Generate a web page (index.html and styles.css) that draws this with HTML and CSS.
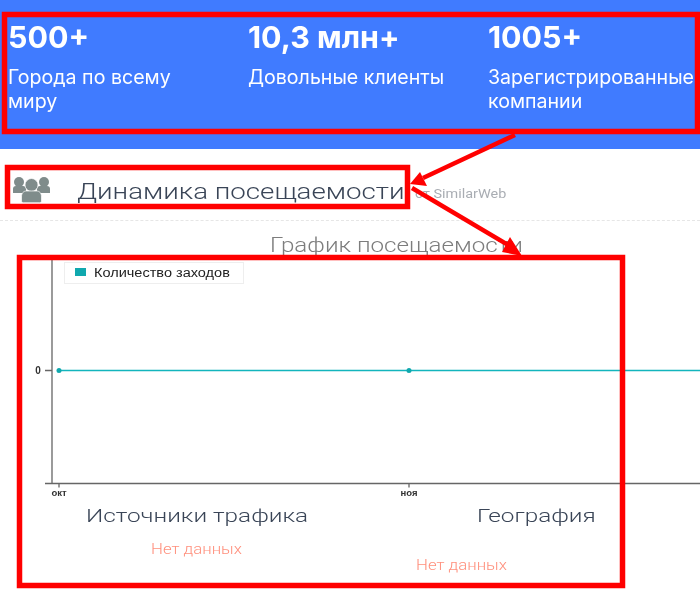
FILE: index.html
```html
<!DOCTYPE html>
<html lang="ru">
<head>
<meta charset="utf-8">
<title>Динамика посещаемости</title>
<link rel="stylesheet" href="styles.css">
</head>
<body>
<div class="page">
  <section class="stats">
    <div class="stat"><div class="stat-num">500+</div><div class="stat-label">Города по всему миру</div></div>
    <div class="stat"><div class="stat-num">10,3 млн+</div><div class="stat-label">Довольные клиенты</div></div>
    <div class="stat"><div class="stat-num">1005+</div><div class="stat-label">Зарегистрированные компании</div></div>
  </section>
  <header class="head">
    <svg class="head-icon" width="40" height="26" viewBox="0 0 40 26">
      <g fill="#7f8c8b">
        <circle cx="7" cy="5" r="5"/>
        <circle cx="32" cy="5" r="5"/>
        <path d="M1 16v-4c0-2 1-3 3-3h7c2 0 3 1 3 3v4z"/>
        <path d="M25 16v-4c0-2 1-3 3-3h7c2 0 3 1 3 3v4z"/>
      </g>
      <g fill="#7f8c8b" stroke="#fff" stroke-width="0.700">
        <circle cx="19.500" cy="8" r="6.500"/>
        <path d="M9.500 24v-4c0-4 2-6 5-6h10c3 0 5 2 5 6v4c0 1-1 1.700-2 1.700H11.500c-1 0-2-.7-2-1.700z"/>
      </g>
    </svg>
    <h1 class="head-title">Динамика посещаемости</h1>
    <span class="head-note">от SimilarWeb</span>
  </header>
  <h2 class="chart-title">График посещаемости</h2>
  <div class="chart">
    <svg class="chart-svg" width="700" height="244" viewBox="0 0 700 244">
      <path class="axis" d="M52 0V226.500M45 226.500H700M59 226.500v4M409 226.500v4M45 113.500h7"/>
      <path class="series" d="M59 113.500H700"/>
      <circle class="dot" cx="59" cy="113.500" r="2.500"/>
      <circle class="dot" cx="409" cy="113.500" r="2.500"/>
      <text class="tick tick-zero" x="38" y="116.500">0</text>
      <text class="tick" x="59" y="238.500">окт</text>
      <text class="tick" x="409" y="238.500">ноя</text>
    </svg>
    <div class="legend"><span class="swatch"></span><span class="legend-text">Количество заходов</span></div>
  </div>
  <div class="columns">
    <section class="col col-traffic">
      <h3 class="col-title">Источники трафика</h3>
      <p class="empty">Нет данных</p>
    </section>
    <section class="col col-geo">
      <h3 class="col-title">География</h3>
      <p class="empty">Нет данных</p>
    </section>
  </div>
  <svg class="marks" width="700" height="593" viewBox="0 0 700 593">
    <rect x="4.500" y="14.500" width="693" height="117"/>
    <rect x="7.500" y="167.500" width="400" height="39"/>
    <rect x="19.500" y="257.500" width="603" height="328"/>
    <path d="M515 135L423 178"/>
    <path d="M412 188L510 246"/>
    <polygon points="410,184 420,172 427,186"/>
    <polygon points="522,256 510,237 502,252"/>
  </svg>
</div>
</body>
</html>
```
FILE: styles.css
```css
* { box-sizing: border-box; }
html, body { margin: 0; background: #fff; }
.page {
  position: relative;
  width: 700px;
  height: 593px;
  overflow: hidden;
  font-family: Roboto, "Liberation Sans", sans-serif;
}
.stats {
  height: 149px;
  background: #407bff;
  color: #fff;
  display: grid;
  grid-template-columns: repeat(3, 240px);
  padding: 18px 0 0 8px;
  font-family: Inter, "Liberation Sans", sans-serif;
}
.stat-num { font-size: 30.400px; font-weight: 700; line-height: 38px; filter: blur(0.3px); }
.stat-label { margin-top: 10px; max-width: 210px; font-size: 19.600px; line-height: 23.500px; filter: blur(0.3px); }
.head {
  height: 72px;
  margin: 0;
  padding: 29px 0 0 12px;
  display: flex;
  align-items: flex-start;
  border-bottom: 1px dashed #e6e6e6;
}
.head-icon { flex: none; margin-top: -1px; filter: blur(0.3px); }
.head-title {
  margin: 0 0 0 25px;
  font-size: 22.500px;
  font-weight: 300;
  line-height: 26px;
  color: #3a4557;
  white-space: nowrap;
  transform: scaleX(1.230);
  transform-origin: left center;
  filter: blur(0.3px);
}
.head-note {
  margin: 9px 0 0 72px;
  font-size: 12px;
  line-height: 14px;
  color: #a9adb3;
  white-space: nowrap;
  transform: scaleX(1.200);
  transform-origin: left center;
  filter: blur(0.3px);
}
.chart-title {
  margin: 14px 0 0 270px;
  font-size: 20px;
  font-weight: 300;
  line-height: 20px;
  color: #7d7d7d;
  white-space: nowrap;
  transform: scaleX(1.210);
  transform-origin: left center;
  filter: blur(0.3px);
}
.chart { position: relative; height: 244px; margin-top: 2px; }
.chart-svg { display: block; filter: blur(0.3px); }
.axis { fill: none; stroke: #666; stroke-width: 1.300; }
.series { fill: none; stroke: #13b5bd; stroke-width: 1.500; }
.dot { fill: #10a8ae; }
.tick {
  font-family: "Liberation Sans", sans-serif;
  font-size: 9.500px;
  font-weight: 700;
  fill: #333;
  text-anchor: middle;
}
.tick-zero { font-size: 10px; }
.legend {
  position: absolute;
  left: 64px;
  top: 5px;
  width: 180px;
  height: 22px;
  display: flex;
  align-items: center;
  padding-left: 10px;
  border: 1px solid #eee;
}
.swatch { width: 11px; height: 8px; background: #10a8ae; margin-top: -3px; }
.legend-text {
  margin-left: 8px;
  font-family: "Liberation Sans", sans-serif;
  font-size: 12px;
  color: #222;
  white-space: nowrap;
  transform: scaleX(1.210);
  transform-origin: left center;
  filter: blur(0.3px);
}
.columns { display: flex; margin-top: 1px; }
.col { white-space: nowrap; }
.col-traffic { width: 477px; padding: 2px 0 0 86px; }
.col-geo { flex: 1; padding-top: 2px; }
.col-title {
  margin: 0;
  font-size: 19px;
  font-weight: 300;
  line-height: 24px;
  color: #3a4557;
  transform: scaleX(1.280);
  transform-origin: left center;
  filter: blur(0.3px);
}
.empty {
  margin: 0;
  font-size: 14px;
  font-weight: 300;
  line-height: 16px;
  color: #ff8f7c;
  transform: scaleX(1.200);
  transform-origin: left center;
  filter: blur(0.3px);
}
.col-traffic .empty { margin: 13px 0 0 65px; }
.col-geo .empty { margin: 29px 0 0 -61px; }
.marks { position: absolute; left: 0; top: 0; pointer-events: none; }
.marks rect { fill: none; stroke: #ff0000; stroke-width: 5.500; }
.marks path { fill: none; stroke: #ff0000; stroke-width: 4.500; }
.marks polygon { fill: #ff0000; }
```
